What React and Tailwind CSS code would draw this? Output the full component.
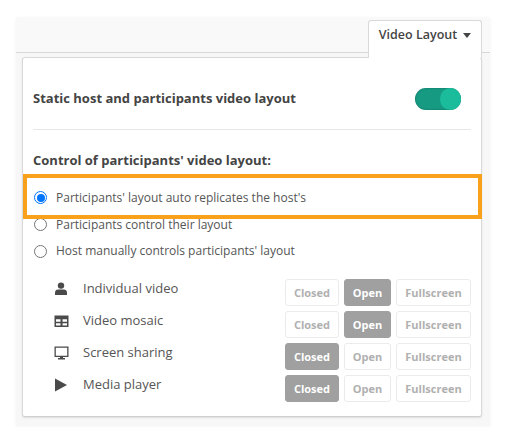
import React from "react";

function Btn({ label, on, w }) {
  return (
    <div className={`${w} h-[27px] pt-[1px] flex items-center justify-center rounded-[3px] border text-[11px] font-bold ${on ? "bg-[#a0a0a0] border-[#a0a0a0] text-white" : "bg-white border-[#ebebeb] text-[#b0b0b0]"}`}>
      {label}
    </div>
  );
}

function Radio({ checked, label, h }) {
  return (
    <div className={`flex items-center ${h} pl-[11px] gap-[9px] text-[12px] text-[#555]`}>
      {checked ? (
        <span className="w-[13px] h-[13px] rounded-full border-[1.5px] border-[#0075ff] bg-white flex items-center justify-center">
          <span className="w-[8px] h-[8px] rounded-full bg-[#0075ff]" />
        </span>
      ) : (
        <span className="w-[13px] h-[13px] rounded-full border border-[#767676] bg-white" />
      )}
      <span>{label}</span>
    </div>
  );
}

const Person = () => (
  <svg width="14" height="14" viewBox="0 0 14 14" fill="#4a4a4a"><circle cx="7" cy="3.6" r="3.2" /><path d="M1 13v-2.500C1 8.500 2.500 7.500 4 7.500h6c1.500 0 3 1 3 3V13z" /></svg>
);
const Mosaic = () => (
  <svg width="15" height="14" viewBox="0 0 15 14"><path fill="#4a4a4a" fillRule="evenodd" d="M0.500 1.500h14v11.500H.5zM2 5.200v2.600h4.500V5.200zM8.500 5.200v2.600H13V5.200zM2 9.300v2.200h4.500V9.300zM8.500 9.300v2.200H13V9.300z" /></svg>
);
const Screen = () => (
  <svg width="15" height="14" viewBox="0 0 15 14"><path fill="#4a4a4a" fillRule="evenodd" d="M0.500 .5h14v10.500h-5.500v1h2v1.500h-7V12h2v-1H.5zM1.800 1.800v7.900h11.400V1.800z" /></svg>
);
const Play = () => (
  <svg width="14" height="14" viewBox="0 0 14 14"><path fill="#4a4a4a" d="M1 0.500L13 7 1 13.500z" /></svg>
);

const rows = [
  { icon: <Person />, label: "Individual video", active: "Open" },
  { icon: <Mosaic />, label: "Video mosaic", active: "Open" },
  { icon: <Screen />, label: "Screen sharing", active: "Closed" },
  { icon: <Play />, label: "Media player", active: "Closed" },
];

export default function App() {
  return (
    <div className="w-[506px] h-[444px] bg-white pt-[18px] pl-[16px] font-['Open_Sans',sans-serif] overflow-hidden">
      <div className="relative w-[474px] h-[408px] bg-[#f7f7f7] shadow-[0_0_3px_rgba(0,0,0,0.06)]">
        <div className="h-[35px] bg-[#f9f9f9] border-b border-[#d8d8d8]" />
        <div className="ml-[6px] mt-[4px] w-[460px] h-[360px] bg-white rounded-[3px] border border-[#d9d9d9] border-b-[#cfcfcf] shadow-[0_1px_2px_rgba(0,0,0,0.1)] px-[10px] text-[#444]">
          <div className="h-[72px] pt-[10px] flex items-center justify-between border-b border-[#e6e6e6]">
            <span className="text-[13px] font-bold text-[#444]">Static host and participants video layout</span>
            <span className="w-[46px] h-[22px] mr-[10px] rounded-full bg-[#169a82] shadow-[inset_0_0_2px_rgba(0,60,50,0.5)] flex justify-end">
              <span className="w-[21px] h-[22px] rounded-full bg-[#1bbc9b]" />
            </span>
          </div>
          <div className="text-[13px] font-bold text-[#444] mt-[21px] mb-[15px] leading-[18px]">Control of participants' video layout:</div>
          <div className="-ml-[10px]">
            <Radio checked h="h-[27px]" label="Participants' layout auto replicates the host's" />
            <Radio h="h-[27px]" label="Participants control their layout" />
            <Radio h="h-[26px]" label="Host manually controls participants' layout" />
          </div>
          <div className="mt-[15px] flex flex-col gap-[5px]">
            {rows.map((r) => (
              <div key={r.label} className="flex items-center h-[27px]">
                <span className="w-[50px] pl-[21px] mb-[8px] flex items-center">{r.icon}</span>
                <span className="text-[13px] text-[#555] flex-1 mb-[8px]">{r.label}</span>
                <div className="flex gap-[5px]">
                  <Btn label="Closed" on={r.active === "Closed"} w="w-[54px]" />
                  <Btn label="Open" on={r.active === "Open"} w="w-[47px]" />
                  <Btn label="Fullscreen" w="w-[75px]" />
                </div>
              </div>
            ))}
          </div>
        </div>
        <div className="absolute left-[352px] top-[2px] w-[114px] h-[38px] bg-white border border-b-0 border-[#d9d9d9] rounded-t-[3px] flex items-start justify-center pt-[5px] gap-[6px] text-[12.5px] font-semibold text-[#444]">
          <span>Video Layout</span>
          <svg width="8" height="5" viewBox="0 0 8 5" className="mt-[7px]"><path d="M0 0h8L4 5z" fill="#444" /></svg>
        </div>
        <div className="absolute left-[7px] top-[156px] w-[459px] h-[45px] border-[4px] border-[#f9a11b]" />
      </div>
    </div>
  );
}
